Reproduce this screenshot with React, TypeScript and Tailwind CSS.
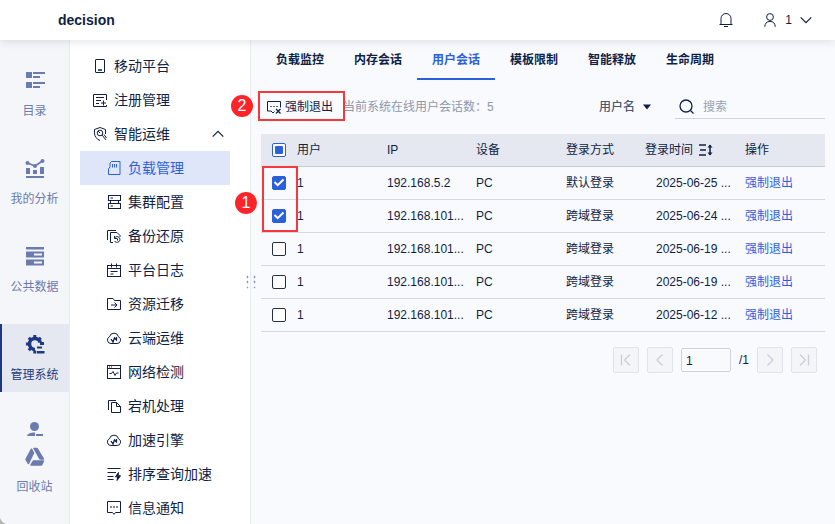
import React, { useEffect, useRef, useState } from 'react';
import clsx from 'clsx';

type IconName =
  | 'phone' | 'register' | 'wrench' | 'card' | 'cluster' | 'backup' | 'log' | 'migrate'
  | 'cloud' | 'network' | 'copy' | 'sort' | 'message';

interface MenuItem {
  label: string;
  icon: IconName;
}

interface Session {
  id: number;
  user: string;
  ip: string;
  device: string;
  method: string;
  time: string;
}

const topMenu: MenuItem[] = [
  { label: '移动平台', icon: 'phone' },
  { label: '注册管理', icon: 'register' },
];

const subMenu: MenuItem[] = [
  { label: '负载管理', icon: 'card' },
  { label: '集群配置', icon: 'cluster' },
  { label: '备份还原', icon: 'backup' },
  { label: '平台日志', icon: 'log' },
  { label: '资源迁移', icon: 'migrate' },
  { label: '云端运维', icon: 'cloud' },
  { label: '网络检测', icon: 'network' },
  { label: '宕机处理', icon: 'copy' },
  { label: '加速引擎', icon: 'cloud' },
  { label: '排序查询加速', icon: 'sort' },
  { label: '信息通知', icon: 'message' },
];

const tabs = ['负载监控', '内存会话', '用户会话', '模板限制', '智能释放', '生命周期'];

const sessions: Session[] = [
  { id: 1, user: '1', ip: '192.168.5.2', device: 'PC', method: '默认登录', time: '2025-06-25 ...' },
  { id: 2, user: '1', ip: '192.168.101...', device: 'PC', method: '跨域登录', time: '2025-06-24 ...' },
  { id: 3, user: '1', ip: '192.168.101...', device: 'PC', method: '跨域登录', time: '2025-06-19 ...' },
  { id: 4, user: '1', ip: '192.168.101...', device: 'PC', method: '跨域登录', time: '2025-06-19 ...' },
  { id: 5, user: '1', ip: '192.168.101...', device: 'PC', method: '跨域登录', time: '2025-06-12 ...' },
];

const iconShapes: Record<IconName, React.ReactNode> = {
  phone: (
    <>
      <rect x="2.5" y="0.5" width="9" height="13" rx="0.5" />
      <path d="M5 11h4" strokeWidth="1.5" />
    </>
  ),
  register: (
    <>
      <path d="M13.5 7V1.5H.5v12h13V12" />
      <path d="M3 4.5h8M3 7.5h5M3 10.500h3M10.5 7.500v5M8 10h5" />
    </>
  ),
  wrench: (
    <>
      <path d="M12.500 7V2.500L7 .5 1.500 2.500V6c0 3.500 2 6 5.500 7.500" />
      <circle cx="7" cy="6" r="2.8" />
      <path d="M5 4l2 2M9 8l4 5M11 7.500l2.500 3.500" />
    </>
  ),
  card: (
    <>
      <path d="M4.5.5H13v13H1.5V8L3 6V2z" />
      <path d="M5.5 3v3.5M7.5 3v3.5M9.5 3v3.5" />
    </>
  ),
  cluster: (
    <>
      <rect x="1.5" y="0.5" width="12" height="5" />
      <rect x="1.5" y="8.5" width="12" height="5" />
      <path d="M3.5 3H6M3.5 11H6M3.5 5.5v3M11.5 5.5v3" />
    </>
  ),
  backup: (
    <>
      <path d="M.5 11V1.5H9" />
      <path d="M6 13.5H3.500v-10H10l3 3V8" />
      <path d="M7.500 9a2.900 2.900 0 1 1 0 3M7.500 7v2.500H10M10.5 9.500v2" />
    </>
  ),
  log: (
    <>
      <rect x="0.5" y="2.5" width="13" height="11" />
      <path d="M4.5.5v4M9.5.5v4M.5 5.5h13M3.500 8.5h7M3.500 11h3" />
    </>
  ),
  migrate: (
    <>
      <path d="M.5 12.5v-11H6l1.500 2h6v9z" />
      <path d="M4 8h6M7.5 5.5 10 8l-2.500 2.500" />
    </>
  ),
  cloud: (
    <>
      <path d="M4 12.5A3.500 3.500 0 0 1 2.500 5.800a4.600 4.600 0 0 1 9 0A3.500 3.500 0 0 1 10 12.500z" />
      <path d="m4 8 2 3 1.500-4L9.5 9V6" strokeWidth="1.3" />
    </>
  ),
  network: (
    <>
      <rect x="0.5" y="0.5" width="13" height="13" />
      <path d="M.5 3.5h13M2 2h1M4 2h1M2.5 8.500h2L6 6.500l2 4 1.500-2.500h2" />
    </>
  ),
  copy: (
    <>
      <path d="M1.5 11V1.5H9" />
      <path d="M4.5 3.5h5l4 4v6h-9zM9.5 3.5v4h4" />
    </>
  ),
  sort: (
    <>
      <path d="M.5 1.5h13M.5 5.500H9M.5 9.5h6M.5 12.5h6" />
      <path d="M11.5 5.500 8.5 9.800h2.200L10 13.500l3.500-4.700h-2.300z" fill="currentColor" />
    </>
  ),
  message: (
    <>
      <path d="M.5.5h13v11h-5L7 13.300 5.5 11.500h-5z" />
      <path d="M3.300 6h1.400M6.300 6h1.400M9.300 6h1.400" strokeWidth="1.5" />
    </>
  ),
};

const Icon: React.FC<{ name: IconName }> = ({ name }) => (
  <svg width="14" height="14" viewBox="0 0 14 14" fill="none" stroke="currentColor" className="shrink-0 overflow-visible">
    {iconShapes[name]}
  </svg>
);

const Chevron: React.FC<{ up?: boolean }> = ({ up }) => (
  <svg width="12" height="8" viewBox="0 0 12 8" fill="none" stroke="currentColor" strokeWidth="1.2">
    <path d={up ? 'M.7 6.700 6 1.300l5.300 5.400' : 'M.7 1.300 6 6.700l5.300-5.400'} />
  </svg>
);

const railIcons = {
  catalog: <path d="M1 1h6v6H1zM8 1h12v2H8zM8 5h7v2H8zM1 11h6v6H1zM8 11h12v2H8zM8 15h7v2H8z" />,
  analysis: (
    <>
      <path d="M1 9h4v6H1zM8 11h4v4H8zM15 8h4v7h-4zM1 17h18v2H1z" />
      <path d="M2.5 4 10 7l7.500-5" fill="none" stroke="currentColor" strokeWidth="1.8" />
      <circle cx="2.5" cy="4" r="2" />
      <circle cx="10" cy="7" r="2" />
      <circle cx="17.5" cy="2" r="2" />
    </>
  ),
  data: <path fillRule="evenodd" d="M1 0h18v2.500H1zM1 4.500h18v6H1zM9 6.500v2h8v-2zM1 12.500h18v6H1zM9 14.500v2h8v-2z" />,
  system: (
    <>
      <path d="M10 14.500A5.500 5.500 0 1 1 15.300 7.500" fill="none" stroke="currentColor" strokeWidth="3.5" />
      {/* gear teeth */}
      <path
        d="M9.800 3V0M5.700 4.700 3.800 2.800M4 9H1M5.700 13.300l-1.900 1.900M9.800 15.500v3M13.900 4.700l1.900-1.900M15 8.500h4"
        fill="none"
        stroke="currentColor"
        strokeWidth="3"
      />
      <path d="M12 11.500h5v2h-5zM12 16h7.500v2.500H12z" />
    </>
  ),
  user: (
    <>
      <circle cx="9.5" cy="4.5" r="4.5" />
      <path d="M2 14c.6-2 3-3.500 8-3.500V14zM11 12h7v2h-7z" />
    </>
  ),
  recycle: (
    <g strokeWidth="1.5" stroke="currentColor" strokeLinejoin="round">
      <path d="M6.500 2.200 8.500 6 3.500 16.500 1 12.300zM9 1.500h3L18.300 12H15zM8.500 14h10l-2 4H6z" />
    </g>
  ),
};

const RailButton: React.FC<{ icon: keyof typeof railIcons; label: string; active?: boolean }> = ({ icon, label, active }) => (
  <button
    className={clsx(
      'flex h-[68px] w-full shrink-0 flex-col items-center gap-3 border-l-2 pt-[11px] pr-0.5 text-xs',
      active ? 'border-[#1d3980] bg-[#e5e8f1] text-[#1d3980]' : 'border-transparent text-[#6b7baf]',
    )}
  >
    <svg width="20" height="20" viewBox="0 0 20 20" fill="currentColor" className="shrink-0">
      {railIcons[icon]}
    </svg>
    <span className="leading-4">{label}</span>
  </button>
);

const Checkbox: React.FC<{ checked: boolean; indeterminate?: boolean; label: string; onChange: () => void }> = ({
  checked,
  indeterminate = false,
  label,
  onChange,
}) => {
  const ref = useRef<HTMLInputElement>(null);

  useEffect(() => {
    if (ref.current) ref.current.indeterminate = indeterminate;
  }, [indeterminate]);

  return (
    <label className="ml-[11px] grid size-3.5 place-items-center">
      <input
        ref={ref}
        type="checkbox"
        aria-label={label}
        checked={checked}
        onChange={onChange}
        className={clsx(
          'col-start-1 row-start-1 size-3.5 appearance-none rounded-xs border',
          checked ? 'border-[#2c60db] bg-[#2c60db]' : indeterminate ? 'border-[#2c60db] bg-white' : 'border-[#222f45] bg-white',
        )}
      />
      {checked && (
        <svg width="14" height="14" viewBox="0 0 14 14" fill="none" stroke="white" strokeWidth="2" className="pointer-events-none col-start-1 row-start-1">
          <path d="m2.500 6 3.200 3.200 5.800-5.700" />
        </svg>
      )}
      {indeterminate && <span className="pointer-events-none col-start-1 row-start-1 size-2 rounded-[1px] bg-[#2c60db]" />}
    </label>
  );
};

const Marker: React.FC<{ value: string; className: string }> = ({ value, className }) => (
  <span
    className={clsx(
      'absolute z-20 flex size-[22px] items-center justify-center rounded-full bg-[#fd2429] text-base leading-none text-white',
      className,
    )}
  >
    {value}
  </span>
);

const PageButton: React.FC<{ label: string; d: string }> = ({ label, d }) => (
  <button
    disabled
    aria-label={label}
    className="flex size-[26px] items-center justify-center rounded-xs border border-[#e0e3ea] bg-[#f3f5f9] text-[#c9ced8]"
  >
    <svg width="14" height="14" viewBox="0 0 14 14" fill="none" stroke="currentColor" strokeWidth="1.3">
      <path d={d} />
    </svg>
  </button>
);

const App: React.FC = () => {
  const [activeMenu, setActiveMenu] = useState('负载管理');
  const [activeTab, setActiveTab] = useState('用户会话');
  const [selected, setSelected] = useState<number[]>([1, 2]);
  const [page, setPage] = useState('1');

  const allSelected = selected.length === sessions.length;

  const toggle = (id: number) => {
    setSelected((prev) => (prev.includes(id) ? prev.filter((s) => s !== id) : [...prev, id]));
  };

  return (
    <div className="bg-[#b4b5b3]">
      <div className="flex h-screen flex-col overflow-hidden rounded-bl-lg bg-[#f9fafe] font-['Liberation_Sans','Noto_Sans_CJK_SC',sans-serif] text-xs text-[#0f1f45]">
        {/* Header */}
        <header className="z-30 flex h-10 shrink-0 items-center bg-white pr-[23px] pl-[58px] shadow-[0_2px_8px_rgba(20,40,60,0.12)]">
          <h1 className="flex-1 text-sm font-bold">decision</h1>
          <button aria-label="消息" className="mr-[30px]">
            <svg width="14" height="14" viewBox="0 0 14 14" fill="none" stroke="currentColor">
              <path d="M.5 11.500h13M2 11.500v-6a5 5 0 0 1 10 0v6M5 13.500h4" />
            </svg>
          </button>
          <button className="flex items-center gap-2">
            <svg width="14" height="14" viewBox="0 0 14 14" fill="none" stroke="currentColor">
              <circle cx="7" cy="4" r="3.4" />
              <path d="M1.800 13.800c0-3.500 2-5.400 5.200-5.400s5.200 1.900 5.200 5.400" />
            </svg>
            <span>1</span>
            <Chevron />
          </button>
        </header>

        <div className="flex min-h-0 flex-1">
          {/* Module rail */}
          <nav className="flex w-[70px] shrink-0 flex-col gap-5 border-r border-[#e8ebf1] bg-[#f4f6fa] pt-5">
            <RailButton icon="catalog" label="目录" />
            <RailButton icon="analysis" label="我的分析" />
            <RailButton icon="data" label="公共数据" />
            <RailButton icon="system" label="管理系统" active />
            <div className="shrink-0">
              <button aria-label="个人" className="flex h-6 w-full justify-center pt-2.5">
                <svg width="20" height="14" viewBox="0 0 20 14" fill="#6b7baf">
                  {railIcons.user}
                </svg>
              </button>
              <RailButton icon="recycle" label="回收站" />
            </div>
          </nav>

          {/* Menu */}
          <nav className="relative w-[181px] shrink-0 border-r border-[#e8ebf1] bg-white pt-[9px] pr-5 pl-2.5 text-sm">
            {topMenu.map((item) => (
              <button key={item.label} className="flex h-[34px] w-full items-center gap-[7px] pl-[13px]">
                <Icon name={item.icon} />
                {item.label}
              </button>
            ))}
            <button className="flex h-[34px] w-full items-center gap-[7px] pr-1.5 pl-[13px]">
              <Icon name="wrench" />
              <span className="flex-1 text-left">智能运维</span>
              <Chevron up />
            </button>
            {subMenu.map((item) => (
              <button
                key={item.label}
                onClick={() => setActiveMenu(item.label)}
                className={clsx(
                  'flex h-[34px] w-full items-center gap-[7px] pl-[27px]',
                  activeMenu === item.label && 'bg-[#dfe6fa] text-[#2c60db]',
                )}
              >
                <Icon name={item.icon} />
                {item.label}
              </button>
            ))}
            <svg width="10" height="14" viewBox="0 0 10 14" fill="#8b97ba" className="absolute top-1/2 -right-1.5 -translate-y-1/2">
              <path d="M1 1h1v2H1zM8 1h1v2H8zM1 6h1v2H1zM8 6h1v2H8zM1 12h1v1H1zM8 12h1v1H8z" stroke="#8b97ba" strokeWidth="0.5" />
            </svg>
          </nav>

          {/* Content */}
          <main className="min-w-0 flex-1 px-2.5">
            <div role="tablist" className="flex h-10">
              {tabs.map((tab) => (
                <button
                  key={tab}
                  role="tab"
                  aria-selected={activeTab === tab}
                  onClick={() => setActiveTab(tab)}
                  className={clsx(
                    'w-[78px] border-b-2 pt-0.5 font-bold',
                    activeTab === tab ? 'border-[#2c60db] text-[#2c60db]' : 'border-transparent',
                  )}
                >
                  {tab}
                </button>
              ))}
            </div>

            {/* Toolbar */}
            <div className="flex h-[54px] items-center">
              <div className="relative">
                <button className="flex h-7 items-center gap-1 px-1.5">
                  <svg width="14" height="14" viewBox="0 0 14 14" fill="none" stroke="currentColor">
                    <path d="M13.5 7.500v-6H.5V11H4l2 2 1.500-1.500M3.300 6.500h1.400M6.300 6.500h1.400M9.300 6.500h1.400" />
                    <path d="m9 9 4.500 4.500M13.500 9 9 13.500" strokeWidth="1.3" />
                  </svg>
                  强制退出
                </button>
                <span className="pointer-events-none absolute -top-0.5 -right-1.5 bottom-0 -left-[3px] z-10 border-2 border-[#f5383c]" />
                <Marker value="2" className="top-0.5 -left-[30px]" />
              </div>
              <span className="ml-1 flex-1 whitespace-nowrap text-[#8f98ab]">当前系统在线用户会话数：5</span>
              <button className="mr-6 flex items-center gap-2 font-medium text-[#4a5873]">
                用户名
                <svg width="8" height="6" viewBox="0 0 8 6" fill="#0f1f45">
                  <path d="M0 .5h8l-4 5z" />
                </svg>
              </button>
              <label className="flex h-6 w-[150px] items-center gap-2 border-b border-[#d0d4de] px-1">
                <svg width="16" height="16" viewBox="0 0 16 16" fill="none" stroke="currentColor" strokeWidth="1.3" className="shrink-0">
                  <circle cx="7" cy="7" r="6" />
                  <path d="m11.500 11.500 3 3" />
                </svg>
                <input placeholder="搜索" aria-label="搜索" className="w-full min-w-0 bg-transparent outline-none placeholder:text-[#98a1b2]" />
              </label>
            </div>

            {/* Sessions */}
            <div className="relative">
              <table className="w-full table-fixed text-left">
                <thead>
                  <tr className="h-8 border-b border-[#c5cbd8] bg-[#e5e8f0]">
                    <th className="w-9">
                      <Checkbox
                        checked={allSelected}
                        indeterminate={selected.length > 0 && !allSelected}
                        label="全选"
                        onChange={() => setSelected(allSelected ? [] : sessions.map((s) => s.id))}
                      />
                    </th>
                    <th className="w-[90px] font-normal">用户</th>
                    <th className="w-[89px] font-normal">IP</th>
                    <th className="w-[90px] font-normal">设备</th>
                    <th className="w-[79px] font-normal">登录方式</th>
                    <th className="w-[100px] font-normal">
                      <span className="flex items-center gap-1.5">
                        登录时间
                        <svg width="14" height="12" viewBox="0 0 14 12" fill="none" stroke="currentColor">
                          <path d="M0 1h7M1 6h6M0 11h7" strokeWidth="1.3" />
                          <path d="M11 1v10" strokeWidth="1.5" />
                          <path d="m8.500 3.500 2.500-3 2.500 3zM8.500 8.500l2.500 3 2.500-3z" fill="currentColor" stroke="none" />
                        </svg>
                      </span>
                    </th>
                    <th className="w-20 font-normal">操作</th>
                  </tr>
                </thead>
                <tbody>
                  {sessions.map((s) => (
                    <tr key={s.id} className="h-[33px] border-b border-[#d3d7e1]">
                      <td>
                        <Checkbox checked={selected.includes(s.id)} label={`选择会话 ${s.id}`} onChange={() => toggle(s.id)} />
                      </td>
                      <td>{s.user}</td>
                      <td>{s.ip}</td>
                      <td>{s.device}</td>
                      <td>{s.method}</td>
                      <td className="pl-[11px]">{s.time}</td>
                      <td>
                        <a href="#" className="text-[#2c60db]">强制退出</a>
                      </td>
                    </tr>
                  ))}
                </tbody>
              </table>
              <span className="pointer-events-none absolute top-8 left-px z-10 h-[66px] w-9 border-2 border-[#f5383c]" />
              <Marker value="1" className="top-[58px] -left-[26px]" />
            </div>

            {/* Pagination */}
            <div className="mt-[15px] flex items-center justify-end gap-2 pr-2">
              <PageButton label="首页" d="M2.500 1.500v11M11 1.500 5.500 7l5.500 5.500" />
              <PageButton label="上一页" d="M9.500 1.500 4 7l5.500 5.500" />
              <input
                aria-label="页码"
                value={page}
                onChange={(e) => setPage(e.target.value)}
                className="h-6 w-[50px] rounded-xs border border-[#cdd2dd] bg-[#f9fafe] px-1 pt-0.5 outline-none"
              />
              <span className="w-2.5">/1</span>
              <PageButton label="下一页" d="M4.500 1.500 10 7l-5.500 5.500" />
              <PageButton label="末页" d="M3 1.500 8.500 7 3 12.500M11.500 1.500v11" />
            </div>
          </main>
        </div>
      </div>
    </div>
  );
};

export default App;
